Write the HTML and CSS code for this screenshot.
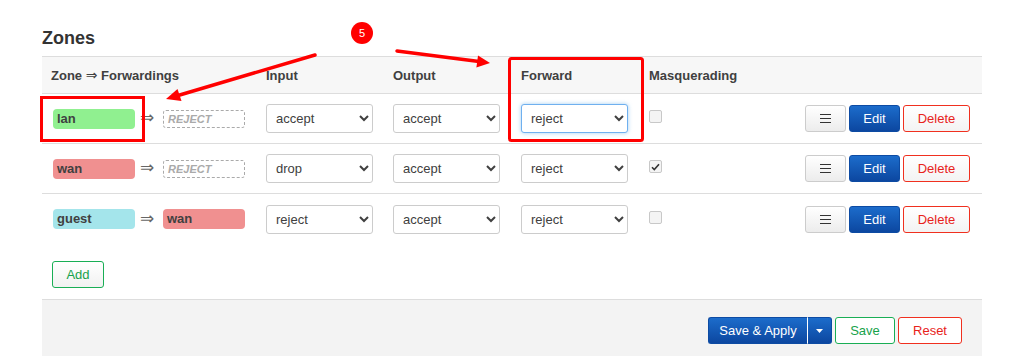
FILE: index.html
```html
<!DOCTYPE html>
<html>
<head>
<meta charset="utf-8">
<link rel="stylesheet" href="styles.css">
</head>
<body>
<div class="page">
  <h3 class="title">Zones</h3>
  <div class="table">
    <div class="tr head">
      <div class="cell">Zone&nbsp;<span class="harr">⇒</span>&nbsp;Forwardings</div>
      <div class="cell">Input</div>
      <div class="cell">Output</div>
      <div class="cell">Forward</div>
      <div class="cell">Masquerading</div>
      <div class="cell"></div>
    </div>
    <div class="tr">
      <div class="cell fwd"><span class="badge lan">lan</span><span class="arr">⇒</span><span class="reject">REJECT</span></div>
      <div class="cell"><select class="sel"><option>accept</option></select></div>
      <div class="cell"><select class="sel"><option>accept</option></select></div>
      <div class="cell"><select class="sel focus"><option>reject</option></select></div>
      <div class="cell"><span class="cb"></span></div>
      <div class="cell actions">
        <button class="btn btn-menu"><svg width="11" height="9" viewBox="0 0 11 9"><path d="M0 0.5H11M0 4.5H11M0 8.5H11" stroke="#333" stroke-width="1"/></svg></button>
        <button class="btn btn-edit">Edit</button>
        <button class="btn btn-del">Delete</button>
      </div>
    </div>
    <div class="tr">
      <div class="cell fwd"><span class="badge wan">wan</span><span class="arr">⇒</span><span class="reject">REJECT</span></div>
      <div class="cell"><select class="sel"><option>drop</option></select></div>
      <div class="cell"><select class="sel"><option>accept</option></select></div>
      <div class="cell"><select class="sel"><option>reject</option></select></div>
      <div class="cell"><span class="cb checked"><svg width="9" height="8" viewBox="0 0 9 8"><path d="M1 4.2L3.3 6.5L8 1.2" fill="none" stroke="#333" stroke-width="1.6"/></svg></span></div>
      <div class="cell actions">
        <button class="btn btn-menu"><svg width="11" height="9" viewBox="0 0 11 9"><path d="M0 0.5H11M0 4.5H11M0 8.5H11" stroke="#333" stroke-width="1"/></svg></button>
        <button class="btn btn-edit">Edit</button>
        <button class="btn btn-del">Delete</button>
      </div>
    </div>
    <div class="tr last">
      <div class="cell fwd"><span class="badge guest">guest</span><span class="arr">⇒</span><span class="badge wan">wan</span></div>
      <div class="cell"><select class="sel"><option>reject</option></select></div>
      <div class="cell"><select class="sel"><option>accept</option></select></div>
      <div class="cell"><select class="sel"><option>reject</option></select></div>
      <div class="cell"><span class="cb"></span></div>
      <div class="cell actions">
        <button class="btn btn-menu"><svg width="11" height="9" viewBox="0 0 11 9"><path d="M0 0.5H11M0 4.5H11M0 8.5H11" stroke="#333" stroke-width="1"/></svg></button>
        <button class="btn btn-edit">Edit</button>
        <button class="btn btn-del">Delete</button>
      </div>
    </div>
  </div>
  <div class="add-row"><button class="btn btn-add">Add</button></div>
  <div class="footer">
    <div class="split">
      <button class="btn btn-apply">Save &amp; Apply</button><button class="btn btn-caret"><svg width="7" height="4" viewBox="0 0 7 4"><path d="M0 0H7L3.5 4Z" fill="#fff"/></svg></button>
    </div>
    <button class="btn btn-save">Save</button>
    <button class="btn btn-reset">Reset</button>
  </div>

  <svg class="annot" width="1020" height="356" viewBox="0 0 1020 356">
    <rect x="41.5" y="97.5" width="102" height="43" fill="none" stroke="#ff0000" stroke-width="3"/>
    <rect x="509.5" y="58.5" width="133" height="82" rx="2" fill="none" stroke="#ff0000" stroke-width="3"/>
    <line x1="315" y1="55" x2="178" y2="95.5" stroke="#ff0000" stroke-width="3.5" stroke-linecap="round"/>
    <polygon points="166,99 181.5,101 177.5,89" fill="#ff0000"/>
    <line x1="397" y1="51" x2="479" y2="61.5" stroke="#ff0000" stroke-width="3.5" stroke-linecap="round"/>
    <polygon points="490,63 476.4,67.5 478,55.5" fill="#ff0000"/>
    <circle cx="362" cy="33" r="11" fill="#ff0000"/>
    <text x="362" y="37" text-anchor="middle" class="num">5</text>
  </svg>
</div>
</body>
</html>
```

FILE: styles.css
```css
* { box-sizing: border-box; }
body {
  margin: 0;
  background: #fff;
  font-family: "Liberation Sans", Arial, sans-serif;
  font-size: 13px;
  color: #404040;
}
.page {
  position: relative;
  width: 1020px;
  height: 356px;
  padding: 0 38px 0 42px;
  overflow: hidden;
}
.title {
  margin: 0;
  padding-top: 27px;
  height: 56px;
  font-size: 18px;
  line-height: 22px;
  font-weight: bold;
  color: #333;
}
.table { border-top: 1px solid #ddd; }
.tr {
  display: grid;
  grid-template-columns: 215px 127px 128px 128px 1fr auto;
  align-items: center;
  height: 50px;
  border-bottom: 1px solid #ddd;
}
.tr.head {
  height: 37px;
  background: #f7f7f7;
  font-weight: bold;
  color: #404040;
}
.tr.last { border-bottom: none; }
.cell {
  padding-left: 9px;
  display: flex;
  align-items: center;
}
.harr {
  font-family: "DejaVu Sans", sans-serif;
  font-weight: normal;
  font-size: 14px;
}
.fwd { padding-left: 11px; }
.badge {
  display: inline-block;
  width: 82px;
  height: 20px;
  line-height: 20px;
  padding-left: 4px;
  border-radius: 4px;
  font-weight: bold;
  color: #404040;
}
.lan { background: #90f090; }
.wan { background: #f09090; }
.guest { background: #a4e5eb; }
.arr {
  width: 28px;
  padding-left: 5px;
  font-size: 17px;
  line-height: 20px;
  color: #666;
  font-family: "DejaVu Sans", sans-serif;
  margin-top: -3px;
}
.reject {
  display: inline-block;
  width: 82px;
  height: 18px;
  line-height: 16px;
  padding-left: 4px;
  border: 1px dashed #aaa;
  border-radius: 3px;
  font-size: 11px;
  font-weight: bold;
  font-style: italic;
  color: #aaa;
}
.sel {
  width: 107px;
  height: 29px;
  padding-left: 5px;
  border: 1px solid #ccc;
  border-radius: 3px;
  background: #fff;
  font-family: "Liberation Sans", Arial, sans-serif;
  font-size: 13px;
  color: #404040;
}
.sel.focus {
  border-color: #6fb0ef;
  box-shadow: 0 0 4px rgba(102, 175, 233, 0.6);
}
.cb {
  width: 13px;
  height: 13px;
  margin-bottom: 4px;
  border: 1px solid #c8c8c8;
  border-radius: 2px;
  background: #f4f4f4;
  display: flex;
  align-items: center;
  justify-content: center;
}
.actions {
  justify-content: flex-end;
  gap: 3px;
  padding-right: 12px;
}
.btn {
  height: 27px;
  border-radius: 3px;
  font-family: "Liberation Sans", Arial, sans-serif;
  font-size: 13px;
  padding: 0;
  display: inline-flex;
  align-items: center;
  justify-content: center;
  cursor: pointer;
}
.btn-menu {
  width: 41px;
  border: 1px solid #ccc;
  background: linear-gradient(#fff, #ececec);
}
.btn-edit {
  width: 51px;
  border: 1px solid #0d4ba3;
  background: linear-gradient(#1c6ccb, #0c47a0);
  color: #fff;
}
.btn-del {
  width: 67px;
  border: 1px solid #f0301f;
  background: linear-gradient(#fff, #f3f3f3);
  color: #e8231b;
}
.add-row { padding: 17px 0 11px 10px; }
.btn-add {
  width: 52px;
  border: 1px solid #19ae55;
  background: linear-gradient(#fff, #f1f1f1);
  color: #17a24b;
}
.footer {
  border-top: 1px solid #ddd;
  background: #f3f3f3;
  height: 60px;
  padding: 17px 20px 0 0;
  display: flex;
  justify-content: flex-end;
  align-items: flex-start;
  gap: 3px;
}
.split { display: flex; }
.btn-apply {
  width: 99px;
  border: 1px solid #0d4ba3;
  border-right: none;
  border-radius: 3px 0 0 3px;
  background: linear-gradient(#1c6ccb, #0c47a0);
  color: #fff;
}
.btn-caret {
  width: 25px;
  border: 1px solid #0d4ba3;
  border-left: 1px solid #fff;
  border-radius: 0 3px 3px 0;
  background: linear-gradient(#1c6ccb, #0c47a0);
}
.btn-save {
  width: 60px;
  border: 1px solid #19ae55;
  background: #fff;
  color: #17a24b;
}
.btn-reset {
  width: 64px;
  border: 1px solid #f0301f;
  background: #fff;
  color: #e8231b;
}
.annot {
  position: absolute;
  left: 0;
  top: 0;
  pointer-events: none;
}
.num {
  font-family: "Liberation Sans", Arial, sans-serif;
  font-size: 11px;
  fill: #fff;
}
```
